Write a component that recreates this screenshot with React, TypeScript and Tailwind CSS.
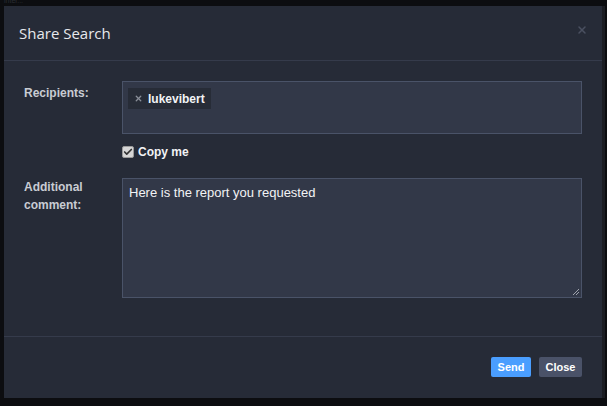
import { Check, X } from 'lucide-react'

export default function App() {
  return (
    <div className="w-[607px] h-[406px] bg-[#0c0d10] relative overflow-hidden" style={{ fontFamily: '"Liberation Sans", Arial, sans-serif' }}>
      <div className="absolute left-[4px] top-[-3px] text-[7px] leading-[8px] text-[#2a2d33]">inter...</div>
      <div className="absolute left-[4px] top-[6px] w-[598px] h-[392px] bg-[#262b37] flex flex-col shadow-[3px_0_0_#1b1d23]">
        {/* HEADER */}
        <div className="h-[55px] border-b border-[#353b4b] flex items-center justify-between pl-[15px] pr-[14px] shrink-0">
          <h3 className="text-[15px] text-[#e6e8ec] pt-[1px]" style={{ fontFamily: '"Open Sans", sans-serif' }}>
            Share Search
          </h3>
          <X size={12} strokeWidth={3} className="text-[#4a5060] mt-[-6px]" />
        </div>

        {/* BODY */}
        <div className="flex-1 pt-[20px] pl-[20px] pr-[20px]">
          <div className="flex">
            <label className="w-[98px] text-[12px] font-bold text-[#c9ccd3] pt-[3px]">Recipients:</label>
            <div className="flex-1">
              <div className="h-[53px] bg-[#323848] border border-[#4a5368] p-[4px] pl-[5px]">
                <span className="inline-flex items-center gap-[5px] h-[21px] px-[6px] bg-[#272c37] text-[12px] font-bold text-[#f2f3f5]">
                  <X size={9} strokeWidth={3.5} className="text-[#8a8f99]" />
                  lukevibert
                </span>
              </div>
              <div className="flex items-center gap-[4px] mt-[9px]">
                <span className="w-[12px] h-[12px] bg-[#d6d6d6] border border-[#9a9a9a] rounded-[2px] flex items-center justify-center">
                  <Check size={10} strokeWidth={4} className="text-[#333]" />
                </span>
                <span className="text-[12px] font-bold text-[#f2f3f5]">Copy me</span>
              </div>
            </div>
          </div>

          <div className="flex mt-[17px]">
            <label className="w-[98px] text-[12px] font-bold text-[#c9ccd3] leading-[18px]">
              Additional
              <br />
              comment:
            </label>
            <div className="flex-1 relative h-[120px] bg-[#323848] border border-[#4a5368] px-[6px] pt-[4px] text-[13px] text-[#f2f3f5]">
              Here is the report you requested
              <svg width="8" height="8" className="absolute right-[1px] bottom-[1px]" viewBox="0 0 8 8">
                <path d="M1 7 L7 1 M4 7 L7 4" stroke="#a0a4ad" strokeWidth="1" />
              </svg>
            </div>
          </div>
        </div>

        {/* FOOTER */}
        <div className="h-[62px] border-t border-[#353b4b] flex justify-end items-start gap-[8px] pt-[20px] pr-[20px] shrink-0">
          <button className="h-[20px] w-[40px] bg-[#4a9eff] text-white text-[11px] font-bold rounded-[2px]">Send</button>
          <button className="h-[20px] w-[43px] bg-[#4a5268] text-white text-[11px] font-bold rounded-[2px]">Close</button>
        </div>
      </div>
    </div>
  )
}
